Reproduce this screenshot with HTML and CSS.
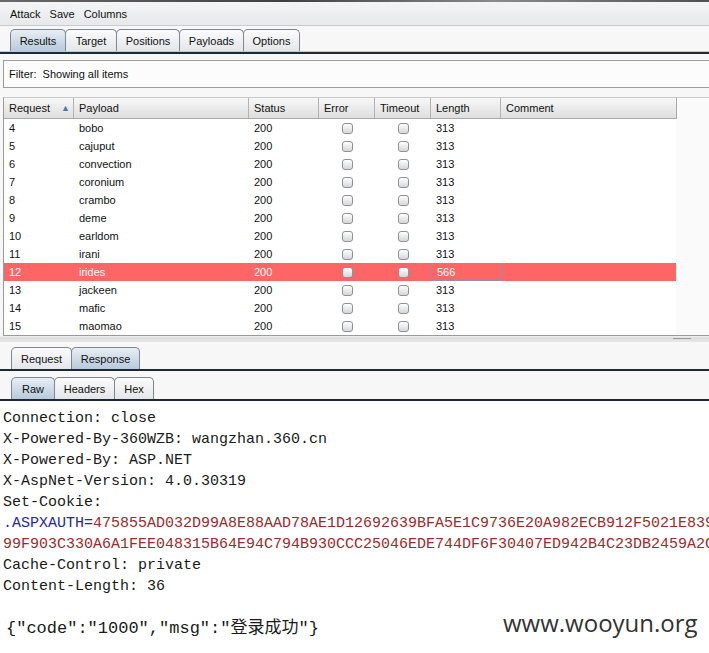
FILE: index.html
```html
<!DOCTYPE html>
<html>
<head>
<meta charset="utf-8">
<link rel="stylesheet" href="styles.css">
</head>
<body>
<div class="app">
  <div class="topedge"></div>
  <div class="menubar">
    <span>Attack</span><span>Save</span><span>Columns</span>
  </div>
  <div class="tabs main-tabs">
    <div class="tab sel">Results</div>
    <div class="tab">Target</div>
    <div class="tab">Positions</div>
    <div class="tab">Payloads</div>
    <div class="tab">Options</div>
  </div>
  <div class="tabline"></div>
  <div class="filter">Filter:&nbsp; Showing all items</div>

  <div class="tablewrap">
    <div class="grid head">
      <div class="hc">Request <span class="arrow">▲</span></div>
      <div class="hc">Payload</div>
      <div class="hc">Status</div>
      <div class="hc">Error</div>
      <div class="hc">Timeout</div>
      <div class="hc">Length</div>
      <div class="hc last">Comment</div>
    </div>
    <div class="body">
      <div class="grid row"><div>4</div><div>bobo</div><div>200</div><div class="cb"><i></i></div><div class="cb"><i></i></div><div>313</div><div></div></div>
      <div class="grid row"><div>5</div><div>cajuput</div><div>200</div><div class="cb"><i></i></div><div class="cb"><i></i></div><div>313</div><div></div></div>
      <div class="grid row"><div>6</div><div>convection</div><div>200</div><div class="cb"><i></i></div><div class="cb"><i></i></div><div>313</div><div></div></div>
      <div class="grid row"><div>7</div><div>coronium</div><div>200</div><div class="cb"><i></i></div><div class="cb"><i></i></div><div>313</div><div></div></div>
      <div class="grid row"><div>8</div><div>crambo</div><div>200</div><div class="cb"><i></i></div><div class="cb"><i></i></div><div>313</div><div></div></div>
      <div class="grid row"><div>9</div><div>deme</div><div>200</div><div class="cb"><i></i></div><div class="cb"><i></i></div><div>313</div><div></div></div>
      <div class="grid row"><div>10</div><div>earldom</div><div>200</div><div class="cb"><i></i></div><div class="cb"><i></i></div><div>313</div><div></div></div>
      <div class="grid row"><div>11</div><div>irani</div><div>200</div><div class="cb"><i></i></div><div class="cb"><i></i></div><div>313</div><div></div></div>
      <div class="grid row hl"><div>12</div><div>irides</div><div>200</div><div class="cb"><i></i></div><div class="cb"><i></i></div><div class="focus">566</div><div></div></div>
      <div class="grid row"><div>13</div><div>jackeen</div><div>200</div><div class="cb"><i></i></div><div class="cb"><i></i></div><div>313</div><div></div></div>
      <div class="grid row"><div>14</div><div>mafic</div><div>200</div><div class="cb"><i></i></div><div class="cb"><i></i></div><div>313</div><div></div></div>
      <div class="grid row"><div>15</div><div>maomao</div><div>200</div><div class="cb"><i></i></div><div class="cb"><i></i></div><div>313</div><div></div></div>
    </div>
  </div>
  <div class="splitter"><span class="grip"></span></div>

  <div class="tabs sub-tabs first">
    <div class="tab w-req">Request</div>
    <div class="tab sel w-resp">Response</div>
  </div>
  <div class="darkline"></div>
  <div class="tabs sub-tabs second">
    <div class="tab sel w-raw">Raw</div>
    <div class="tab w-hdr">Headers</div>
    <div class="tab w-hex">Hex</div>
  </div>
  <div class="darkline"></div>

  <div class="response">
<div class="ln">Connection: close</div>
<div class="ln">X-Powered-By-360WZB: wangzhan.360.cn</div>
<div class="ln">X-Powered-By: ASP.NET</div>
<div class="ln">X-AspNet-Version: 4.0.30319</div>
<div class="ln">Set-Cookie:</div>
<div class="ln"><span class="ck">.ASPXAUTH=</span><span class="hex">475855AD032D99A8E88AAD78AE1D12692639BFA5E1C9736E20A982ECB912F5021E839</span></div>
<div class="ln"><span class="hex">99F903C330A6A1FEE048315B64E94C794B930CCC25046EDE744DF6F30407ED942B4C23DB2459A2C</span></div>
<div class="ln">Cache-Control: private</div>
<div class="ln">Content-Length: 36</div>
<div class="ln">&nbsp;</div>
<div class="ln json">{"code":"1000","msg":"登录成功"}</div>
    <div class="watermark">www.wooyun.org</div>
  </div>
</div>
</body>
</html>
```
FILE: styles.css
```css
html, body {
  margin: 0;
  padding: 0;
  background: #ffffff;
}
.app {
  width: 709px;
  height: 653px;
  overflow: hidden;
  background: #f7f7f7;
  font-family: "Liberation Sans", Arial, sans-serif;
  font-size: 11px;
  color: #111;
  display: flex;
  flex-direction: column;
}
.topedge {
  height: 2px;
  background: linear-gradient(90deg, #6a6a6a, #404040 40%, #8a8a8a 70%, #505050);
}
.menubar {
  height: 23px;
  display: flex;
  align-items: center;
  gap: 9px;
  padding-left: 10px;
  background: linear-gradient(#f4f5f6, #e6e8ea);
  border-bottom: 1px solid #c9cbce;
}
.tabs {
  display: flex;
  align-items: flex-end;
  padding-left: 10px;
}
.main-tabs {
  height: 24px;
  margin-top: 1px;
}
.tab {
  height: 22px;
  box-sizing: border-box;
  border: 1px solid #7f8690;
  border-bottom: none;
  border-radius: 5px 5px 0 0;
  background: linear-gradient(#fbfbfc, #e4e6e9);
  display: flex;
  align-items: center;
  justify-content: center;
  margin-right: -1px;
  color: #111;
}
.tab.sel {
  background: linear-gradient(#e8eef4, #b7cadb);
}
.main-tabs .tab:nth-child(1) { width: 56px; }
.main-tabs .tab:nth-child(2) { width: 52px; }
.main-tabs .tab:nth-child(3) { width: 64px; }
.main-tabs .tab:nth-child(4) { width: 65px; }
.main-tabs .tab:nth-child(5) { width: 57px; }
.tabline {
  height: 1px;
  background: #b6cbe0;
  border-bottom: 2px solid #1d2838;
}
.filter {
  margin: 6px 0 0 3px;
  height: 26px;
  border: 1px solid #9c9c9c;
  border-right: none;
  background: #fcfcfc;
  display: flex;
  align-items: center;
  padding-left: 5px;
}
.tablewrap {
  margin: 9px 0 0 3px;
  border-left: 1px solid #9a9a9a;
  border-top: 1px solid #c9c9c9;
  border-bottom: 1px solid #9a9a9a;
  background: #fafafa;
}
.grid {
  display: grid;
  grid-template-columns: 70px 175px 70px 56px 56px 70px 175px;
  width: 672px;
}
.head {
  height: 20px;
  background: linear-gradient(#f7f7f7, #dedede);
  border-bottom: 1px solid #a9a9a9;
  border-right: 1px solid #a9a9a9;
}
.hc {
  border-right: 1px solid #b3b3b3;
  display: flex;
  align-items: center;
  padding-left: 5px;
  position: relative;
}
.hc.last { border-right: none; }
.arrow {
  position: absolute;
  left: 57px;
  top: 5px;
  font-size: 9px;
  color: #4f78b0;
}
.body {
  width: 672px;
  background: #ffffff;
}
.row {
  height: 18px;
}
.row > div {
  display: flex;
  align-items: center;
  padding-left: 5px;
  box-sizing: border-box;
}
.row > div.cb {
  justify-content: center;
  padding-left: 0;
}
.cb i {
  display: block;
  width: 11px;
  height: 11px;
  box-sizing: border-box;
  border: 1px solid #8e9296;
  border-radius: 3px;
  background: linear-gradient(#ffffff, #d4d6d9);
}
.row.hl {
  background: #fe6565;
  color: #ffffff;
}
.row.hl .focus {
  border: 1px solid #8f8fb3;
}
.splitter {
  height: 6px;
  background: linear-gradient(#f1f1f1, #dcdcdc 40%, #e9e9e9);
  position: relative;
}
.grip {
  position: absolute;
  left: 673px;
  top: 2px;
  width: 18px;
  height: 1px;
  background: #9a9a9a;
}
.sub-tabs.first {
  height: 23px;
  margin-top: 4px;
  padding-left: 11px;
}
.sub-tabs.second {
  height: 24px;
  margin-top: 4px;
  padding-left: 11px;
}
.w-req { width: 61px; }
.w-resp { width: 69px; }
.w-raw { width: 44px; }
.w-hdr { width: 61px; }
.w-hex { width: 40px; }
.darkline {
  height: 2px;
  background: #1d2838;
}
.response {
  flex: 1;
  background: #ffffff;
  position: relative;
  padding: 7px 0 0 3px;
  font-family: "Liberation Mono", "Noto Sans CJK SC", monospace;
  font-size: 15px;
  color: #1a1a1a;
  overflow: hidden;
}
.ln {
  height: 21px;
  line-height: 21px;
  white-space: pre;
}
.ck { color: #2727a6; }
.hex { color: #9e2a2a; }
.json {
  font-size: 17px;
  margin-left: 3px;
}
.watermark {
  position: absolute;
  left: 503px;
  top: 205px;
  font-family: "Open Sans", "Liberation Sans", sans-serif;
  font-size: 24px;
  color: #333333;
}
```
